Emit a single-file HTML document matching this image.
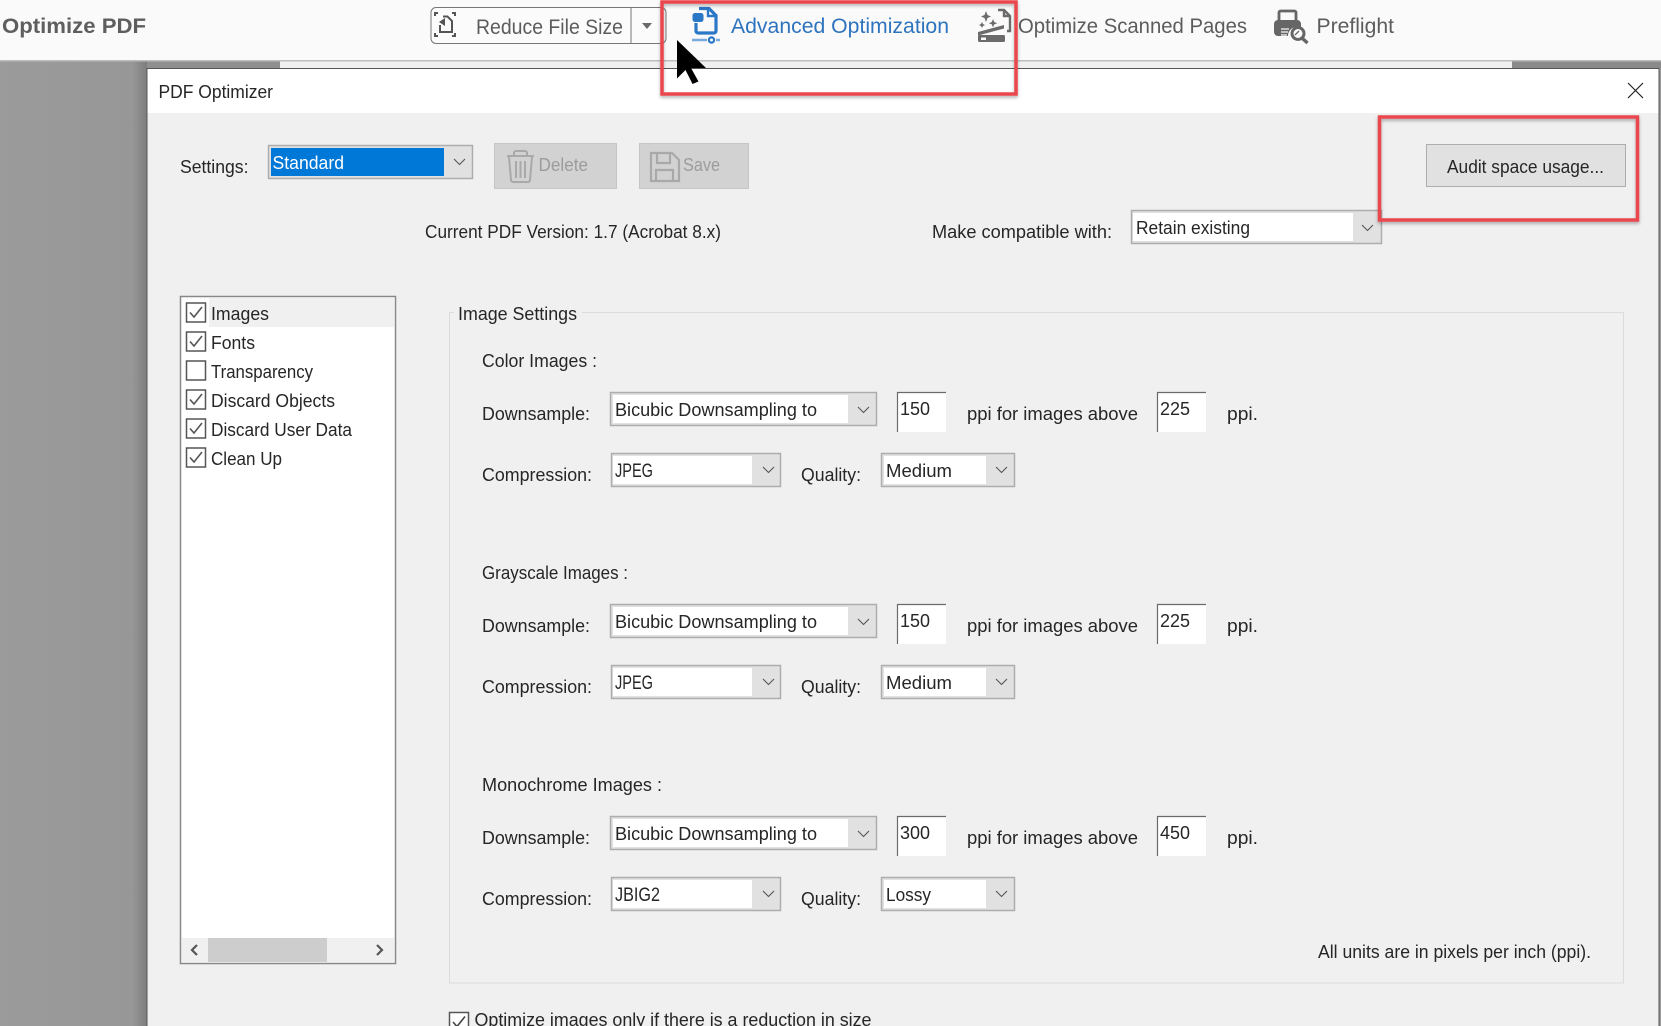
<!DOCTYPE html>
<html>
<head>
<meta charset="utf-8">
<title>PDF Optimizer</title>
<style>
html,body{margin:0;padding:0;background:#999;width:1661px;height:1026px;overflow:hidden}
svg{display:block;position:absolute;left:0;top:0;filter:blur(.3px)}
text{font-family:"Liberation Sans",sans-serif;font-size:18px;fill:#262626}
.tb{font-size:21px;fill:#5c5c5c}
.ch{fill:none;stroke:#555;stroke-width:1.1}
.ck{fill:none;stroke:#555;stroke-width:1.6}
.cb{fill:#fff;stroke:#555;stroke-width:1.5}
.sel{fill:#e1e1e1;stroke:#adadad;stroke-width:1.5}
</style>
</head>
<body>
<svg width="1661" height="1026" viewBox="0 0 1661 1026" xmlns="http://www.w3.org/2000/svg">
<defs>
<linearGradient id="lg" x1="0" x2="1" y1="0" y2="0"><stop offset="0" stop-color="#9b9b9b"/><stop offset=".9" stop-color="#979797"/><stop offset="1" stop-color="#7d7d7d"/></linearGradient>
<filter id="sh" x="-5%" y="-10%" width="110%" height="125%"><feDropShadow dx="0" dy="2" stdDeviation="1.5" flood-color="#000" flood-opacity=".3"/></filter>
</defs>

<!-- background and toolbar -->
<rect width="1661" height="1026" fill="#999"/>
<rect x="0" y="61" width="147" height="965" fill="url(#lg)"/>
<rect x="280" y="61" width="1232" height="7" fill="#f0f0f0"/>
<rect x="1512" y="61" width="149" height="7" fill="#8a8a8a"/>
<rect x="147" y="61" width="133" height="7" fill="#8f8f8f"/>
<rect width="1661" height="60" fill="#fafafa"/>
<rect y="60" width="1661" height="1.5" fill="#bdbdbd"/>

<text x="2" y="33" font-weight="bold" style="font-size:21px;fill:#5e5e5e" textLength="144" lengthAdjust="spacingAndGlyphs">Optimize PDF</text>

<rect x="431" y="7.5" width="235" height="36" rx="5" fill="#fbfbfb" stroke="#777" stroke-width="1"/>
<line x1="631" y1="7.5" x2="631" y2="43.5" stroke="#777"/>
<path d="M435 16v-3h3M452 13h3v3M435 33v3h3M455 33v3h-3" fill="none" stroke="#555" stroke-width="2"/>
<path d="M443 16.500h4.500l4.500 4.500v11h-12v-7" fill="none" stroke="#555" stroke-width="2"/>
<path d="M445 18l-6 4 6 4z" fill="#555"/>
<text class="tb" x="476" y="34" textLength="147" lengthAdjust="spacingAndGlyphs">Reduce File Size</text>
<path d="M642 23h10l-5 6z" fill="#6a6a6a"/>

<!-- advanced optimization -->
<path d="M699 8.500h10l7 7v15.500a2 2 0 0 1-2 2h-16a2 2 0 0 1-2-2v-8" fill="none" stroke="#2a78c6" stroke-width="3.200"/>
<path d="M708 8v8h8" fill="none" stroke="#2a78c6" stroke-width="2.400"/>
<rect x="692.500" y="13" width="11" height="9" rx="2.500" fill="#2a78c6"/>
<path d="M692 40h15M716 40h4" stroke="#79aade" stroke-width="2.400"/>
<circle cx="711.500" cy="40" r="2.600" fill="none" stroke="#2a78c6" stroke-width="2.200"/>
<text class="tb" style="fill:#2d73bd" x="731" y="33" textLength="218" lengthAdjust="spacingAndGlyphs">Advanced Optimization</text>

<!-- optimize scanned -->
<path d="M998 10h6l6 6v15h-3M1004 10v6h6" fill="none" stroke="#6b6b6b" stroke-width="2.400"/>
<path d="M986 11l1.500 4 3.500 1.500-3.500 1.500-1.500 4-1.500-4-3.500-1.500 3.500-1.500zM993 19l1.200 3 3 1.200-3 1.200-1.200 3-1.200-3-3-1.200 3-1.200zM982 22l1 2 2 1-2 1-1 2-1-2-2-1 2-1z" fill="#6b6b6b"/>
<path d="M978 32l26-7v3.500l-26 7z" fill="#6b6b6b"/>
<rect x="978" y="35" width="27" height="7" rx="1.500" fill="#6b6b6b"/>
<rect x="981" y="37.500" width="5" height="2.500" fill="#fafafa"/>
<text class="tb" x="1018" y="33" textLength="229" lengthAdjust="spacingAndGlyphs">Optimize Scanned Pages</text>

<!-- preflight -->
<rect x="1279" y="11" width="17" height="11" rx="1.500" fill="none" stroke="#666" stroke-width="2.800"/>
<path d="M1278 20h19a4 4 0 0 1 4 4v3h-6a9 9 0 0 0-7 9h-10a4 4 0 0 1-4-4v-8a4 4 0 0 1 4-4z" fill="#666"/>
<path d="M1281 29h8M1281 32h7M1281 35h6" stroke="#fafafa" stroke-width="1.300"/>
<circle cx="1298" cy="33.500" r="6" fill="#fafafa" stroke="#666" stroke-width="3"/>
<path d="M1302.500 38.500l5 4.500" stroke="#666" stroke-width="3.400"/>
<path d="M1295 35l4-4" stroke="#666" stroke-width="1.300"/>
<text class="tb" x="1316.500" y="33" textLength="77.500" lengthAdjust="spacingAndGlyphs">Preflight</text>

<!-- dialog -->
<rect x="147" y="68" width="1512" height="958" fill="#f0f0f0"/>
<rect x="147" y="68" width="1512" height="45" fill="#fff"/>
<path d="M147 1026V68.500H1659V1026" fill="none" stroke="#555" stroke-width="1"/>
<text x="158.500" y="98" textLength="114.500" lengthAdjust="spacingAndGlyphs">PDF Optimizer</text>
<path d="M1628 83l15 15M1643 83l-15 15" stroke="#222" stroke-width="1.200" fill="none"/>

<!-- settings row -->
<text x="180" y="173" textLength="68.500" lengthAdjust="spacingAndGlyphs">Settings:</text>
<rect class="sel" x="268.500" y="145.500" width="204" height="33"/>
<rect x="271" y="148" width="173" height="28" fill="#0078d7"/>
<text x="272.500" y="169" style="fill:#fff" textLength="71.500" lengthAdjust="spacingAndGlyphs">Standard</text>
<path class="ch" d="M454 159l5.500 5.500 5.500-5.500"/>

<rect x="494.500" y="143.500" width="122" height="45" fill="#d2d2d2" stroke="#c6c6c6"/>
<path d="M507 156h27M514 156v-3a2 2 0 0 1 2-2h9a2 2 0 0 1 2 2v3M509 157l2 23a2 2 0 0 0 2 2h15a2 2 0 0 0 2-2l2-23M516 161v17M520.500 161v17M525 161v17" fill="none" stroke="#a9a9a9" stroke-width="2"/>
<text x="538.500" y="171" style="fill:#9c9c9c" textLength="49.500" lengthAdjust="spacingAndGlyphs">Delete</text>

<rect x="639.500" y="143.500" width="109" height="45" fill="#d2d2d2" stroke="#c6c6c6"/>
<path d="M651 153h21l7 7v21h-28zM657 153v10h13v-10M656 181v-11h17v11" fill="none" stroke="#a9a9a9" stroke-width="2.200"/>
<text x="683" y="171" style="fill:#9c9c9c" textLength="37" lengthAdjust="spacingAndGlyphs">Save</text>

<text x="425" y="238" textLength="296" lengthAdjust="spacingAndGlyphs">Current PDF Version: 1.7 (Acrobat 8.x)</text>
<text x="932" y="238" textLength="180" lengthAdjust="spacingAndGlyphs">Make compatible with:</text>
<rect class="sel" x="1131.500" y="210.500" width="250" height="33"/>
<rect x="1133" y="213" width="220" height="28" fill="#fff"/>
<text x="1136" y="234" textLength="114" lengthAdjust="spacingAndGlyphs">Retain existing</text>
<path class="ch" d="M1362 225l5.500 5.500 5.500-5.500"/>

<rect x="1426.500" y="144.500" width="199" height="42" fill="#e1e1e1" stroke="#adadad"/>
<text x="1447" y="173" textLength="157" lengthAdjust="spacingAndGlyphs">Audit space usage...</text>

<!-- list -->
<rect x="180.500" y="296.500" width="215" height="667" fill="#fff" stroke="#888" stroke-width="1.500"/>
<rect x="209" y="298" width="185" height="29" fill="#f0f0f0"/>
<rect class="cb" x="186.500" y="303" width="19" height="19"/>
<path class="ck" d="M190 312.500l4 4.500 8-10"/>
<rect class="cb" x="186.500" y="332" width="19" height="19"/>
<path class="ck" d="M190 341.500l4 4.500 8-10"/>
<rect class="cb" x="186.500" y="361" width="19" height="19"/>
<rect class="cb" x="186.500" y="390" width="19" height="19"/>
<path class="ck" d="M190 399.500l4 4.500 8-10"/>
<rect class="cb" x="186.500" y="419" width="19" height="19"/>
<path class="ck" d="M190 428.500l4 4.500 8-10"/>
<rect class="cb" x="186.500" y="448" width="19" height="19"/>
<path class="ck" d="M190 457.500l4 4.500 8-10"/>
<text x="211" y="320" textLength="58" lengthAdjust="spacingAndGlyphs">Images</text>
<text x="211" y="349" textLength="44" lengthAdjust="spacingAndGlyphs">Fonts</text>
<text x="211" y="378" textLength="102" lengthAdjust="spacingAndGlyphs">Transparency</text>
<text x="211" y="407" textLength="124" lengthAdjust="spacingAndGlyphs">Discard Objects</text>
<text x="211" y="436" textLength="141" lengthAdjust="spacingAndGlyphs">Discard User Data</text>
<text x="211" y="465" textLength="71" lengthAdjust="spacingAndGlyphs">Clean Up</text>
<rect x="182" y="938" width="212" height="24" fill="#f0f0f0"/>
<rect x="208" y="938" width="119" height="24" fill="#cdcdcd"/>
<path d="M197 945l-5 5 5 5M377 945l5 5-5 5" fill="none" stroke="#555" stroke-width="2.200"/>

<!-- group -->
<rect x="449.500" y="312.500" width="1174" height="670.500" fill="none" stroke="#dcdcdc"/>
<rect x="454" y="305" width="128" height="16" fill="#f0f0f0"/>
<text x="458" y="320" textLength="119" lengthAdjust="spacingAndGlyphs">Image Settings</text>

<!-- color images -->
<text x="482" y="367" textLength="115" lengthAdjust="spacingAndGlyphs">Color Images :</text>
<text x="482" y="420" textLength="108" lengthAdjust="spacingAndGlyphs">Downsample:</text>
<rect class="sel" x="610.500" y="392.500" width="266" height="33"/>
<rect x="613" y="395" width="235" height="28" fill="#fff"/>
<text x="615" y="416" textLength="202" lengthAdjust="spacingAndGlyphs">Bicubic Downsampling to</text>
<path class="ch" d="M858 407l5.500 5.500 5.500-5.500"/>
<rect x="897" y="392" width="49" height="40" fill="#fff"/>
<path d="M897.500 432V392.500H946" fill="none" stroke="#6a6a6a" stroke-width="1.200"/>
<text x="900" y="415" textLength="30" lengthAdjust="spacingAndGlyphs">150</text>
<text x="967" y="420" textLength="171" lengthAdjust="spacingAndGlyphs">ppi for images above</text>
<rect x="1157" y="392" width="49" height="40" fill="#fff"/>
<path d="M1157.500 432V392.500H1206" fill="none" stroke="#6a6a6a" stroke-width="1.200"/>
<text x="1160" y="415" textLength="30" lengthAdjust="spacingAndGlyphs">225</text>
<text x="1227" y="420" textLength="31" lengthAdjust="spacingAndGlyphs">ppi.</text>
<text x="482" y="481" textLength="110" lengthAdjust="spacingAndGlyphs">Compression:</text>
<rect class="sel" x="611.500" y="453.500" width="169" height="33"/>
<rect x="613" y="456" width="139" height="28" fill="#fff"/>
<text x="615" y="477" textLength="38" lengthAdjust="spacingAndGlyphs" style="font-size:19px">JPEG</text>
<path class="ch" d="M763 467l5.500 5.500 5.500-5.500"/>
<text x="801" y="481" textLength="60" lengthAdjust="spacingAndGlyphs">Quality:</text>
<rect class="sel" x="881.500" y="453.500" width="133" height="33"/>
<rect x="884" y="456" width="102" height="28" fill="#fff"/>
<text x="886" y="477" textLength="66" lengthAdjust="spacingAndGlyphs">Medium</text>
<path class="ch" d="M996 467l5.500 5.500 5.500-5.500"/>

<!-- grayscale images -->
<text x="482" y="579" textLength="146" lengthAdjust="spacingAndGlyphs">Grayscale Images :</text>
<text x="482" y="632" textLength="108" lengthAdjust="spacingAndGlyphs">Downsample:</text>
<rect class="sel" x="610.500" y="604.500" width="266" height="33"/>
<rect x="613" y="607" width="235" height="28" fill="#fff"/>
<text x="615" y="628" textLength="202" lengthAdjust="spacingAndGlyphs">Bicubic Downsampling to</text>
<path class="ch" d="M858 619l5.500 5.500 5.500-5.500"/>
<rect x="897" y="604" width="49" height="40" fill="#fff"/>
<path d="M897.500 644V604.500H946" fill="none" stroke="#6a6a6a" stroke-width="1.200"/>
<text x="900" y="627" textLength="30" lengthAdjust="spacingAndGlyphs">150</text>
<text x="967" y="632" textLength="171" lengthAdjust="spacingAndGlyphs">ppi for images above</text>
<rect x="1157" y="604" width="49" height="40" fill="#fff"/>
<path d="M1157.500 644V604.500H1206" fill="none" stroke="#6a6a6a" stroke-width="1.200"/>
<text x="1160" y="627" textLength="30" lengthAdjust="spacingAndGlyphs">225</text>
<text x="1227" y="632" textLength="31" lengthAdjust="spacingAndGlyphs">ppi.</text>
<text x="482" y="693" textLength="110" lengthAdjust="spacingAndGlyphs">Compression:</text>
<rect class="sel" x="611.500" y="665.500" width="169" height="33"/>
<rect x="613" y="668" width="139" height="28" fill="#fff"/>
<text x="615" y="689" textLength="38" lengthAdjust="spacingAndGlyphs" style="font-size:19px">JPEG</text>
<path class="ch" d="M763 679l5.500 5.500 5.500-5.500"/>
<text x="801" y="693" textLength="60" lengthAdjust="spacingAndGlyphs">Quality:</text>
<rect class="sel" x="881.500" y="665.500" width="133" height="33"/>
<rect x="884" y="668" width="102" height="28" fill="#fff"/>
<text x="886" y="689" textLength="66" lengthAdjust="spacingAndGlyphs">Medium</text>
<path class="ch" d="M996 679l5.500 5.500 5.500-5.500"/>

<!-- monochrome images -->
<text x="482" y="791" textLength="180" lengthAdjust="spacingAndGlyphs">Monochrome Images :</text>
<text x="482" y="844" textLength="108" lengthAdjust="spacingAndGlyphs">Downsample:</text>
<rect class="sel" x="610.500" y="816.500" width="266" height="33"/>
<rect x="613" y="819" width="235" height="28" fill="#fff"/>
<text x="615" y="840" textLength="202" lengthAdjust="spacingAndGlyphs">Bicubic Downsampling to</text>
<path class="ch" d="M858 831l5.500 5.500 5.500-5.500"/>
<rect x="897" y="816" width="49" height="40" fill="#fff"/>
<path d="M897.500 856V816.500H946" fill="none" stroke="#6a6a6a" stroke-width="1.200"/>
<text x="900" y="839" textLength="30" lengthAdjust="spacingAndGlyphs">300</text>
<text x="967" y="844" textLength="171" lengthAdjust="spacingAndGlyphs">ppi for images above</text>
<rect x="1157" y="816" width="49" height="40" fill="#fff"/>
<path d="M1157.500 856V816.500H1206" fill="none" stroke="#6a6a6a" stroke-width="1.200"/>
<text x="1160" y="839" textLength="30" lengthAdjust="spacingAndGlyphs">450</text>
<text x="1227" y="844" textLength="31" lengthAdjust="spacingAndGlyphs">ppi.</text>
<text x="482" y="905" textLength="110" lengthAdjust="spacingAndGlyphs">Compression:</text>
<rect class="sel" x="611.500" y="877.500" width="169" height="33"/>
<rect x="613" y="880" width="139" height="28" fill="#fff"/>
<text x="615" y="901" textLength="45" lengthAdjust="spacingAndGlyphs" style="font-size:19px">JBIG2</text>
<path class="ch" d="M763 891l5.500 5.500 5.500-5.500"/>
<text x="801" y="905" textLength="60" lengthAdjust="spacingAndGlyphs">Quality:</text>
<rect class="sel" x="881.500" y="877.500" width="133" height="33"/>
<rect x="884" y="880" width="102" height="28" fill="#fff"/>
<text x="886" y="901" textLength="45" lengthAdjust="spacingAndGlyphs">Lossy</text>
<path class="ch" d="M996 891l5.500 5.500 5.500-5.500"/>

<text x="1318" y="958" textLength="273" lengthAdjust="spacingAndGlyphs">All units are in pixels per inch (ppi).</text>

<!-- bottom checkbox -->
<rect x="449.500" y="1012.500" width="19" height="19" fill="#fff" stroke="#555" stroke-width="1.500"/>
<path d="M453 1022l4 4.500 8-10" fill="none" stroke="#444" stroke-width="1.600"/>
<text x="474.500" y="1026" textLength="397" lengthAdjust="spacingAndGlyphs">Optimize images only if there is a reduction in size</text>

<!-- cursor -->
<path d="M677 40l29 28h-15l7.500 13.500-6 2.500-7-14-8.500 8.500z" fill="#000"/>

<!-- red callouts -->
<rect x="662" y="2" width="354" height="92" fill="none" stroke="#e9474d" stroke-width="3.500" filter="url(#sh)"/>
<rect x="1379.500" y="117" width="258" height="103" fill="none" stroke="#e9474d" stroke-width="3.500" filter="url(#sh)"/>
</svg>
</body>
</html>
